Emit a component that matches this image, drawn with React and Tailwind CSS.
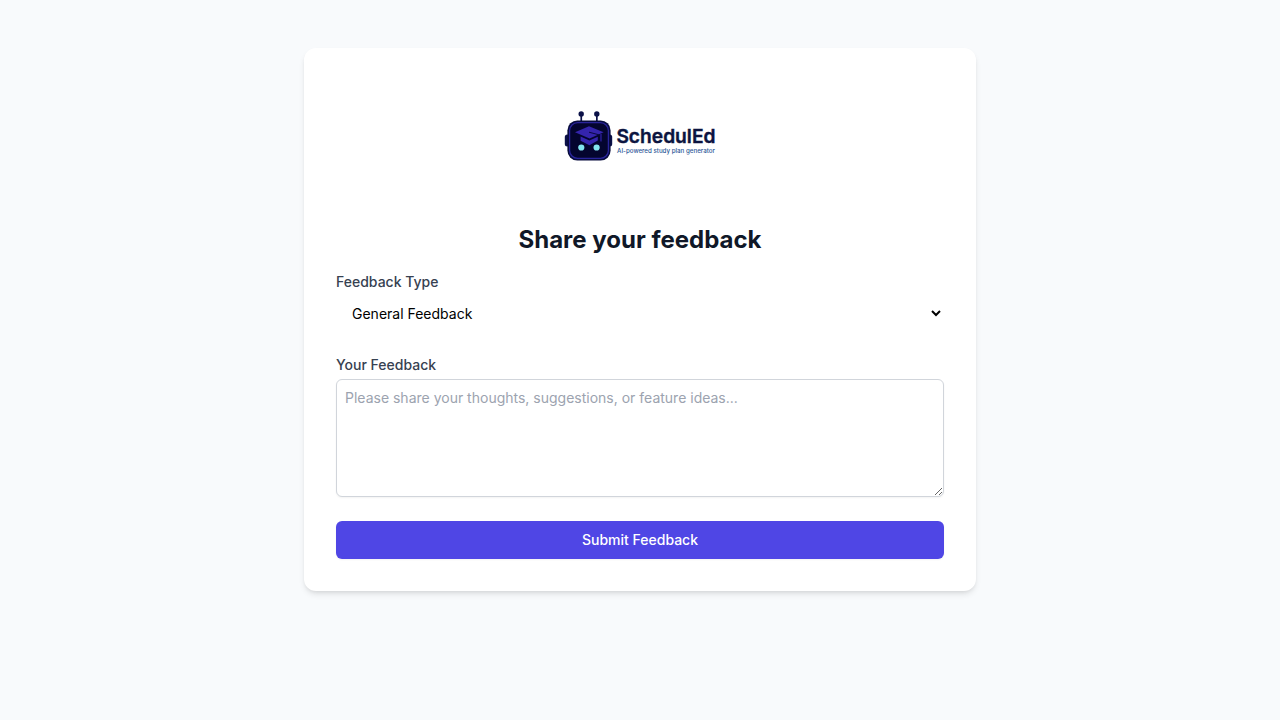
function Logo() {
  return (
    <svg viewBox="0 0 152 52" className="h-[52px] w-[152px] overflow-visible" role="img" aria-label="SchedulEd">
      <g fill="#0b1148">
        <circle cx="17.2" cy="4" r="2.7" />
        <circle cx="32.8" cy="4" r="2.7" />
        <rect x="16.4" y="4" width="1.7" height="8" />
        <rect x="32" y="4" width="1.7" height="8" />
        <rect x="0.8" y="24.5" width="5" height="12" rx="2.5" />
        <rect x="43.2" y="24.5" width="5" height="12" rx="2.5" />
      </g>
      <rect x="3.4" y="10.4" width="43.2" height="40.2" rx="10" fill="#070b3c" />
      <rect x="5.6" y="12.6" width="38.8" height="35.8" rx="8" fill="#04052f" stroke="#29249b" strokeWidth="1.3" />
      <path d="M11 22.2 25 16.2 39.6 22.2 25.6 28.6Z" fill="#3424ad" />
      <path d="M16.6 26.6 25.4 30.6 33.8 26.8V30.4L25.4 35.2 16.6 30.8Z" fill="#3424ad" />
      <path d="M25 22.2 36.4 25.2V31" fill="none" stroke="#080741" strokeWidth="1" />
      <path d="M37 24V31.4" fill="none" stroke="#3424ad" strokeWidth="1.1" />
      <circle cx="17.3" cy="37.5" r="3.1" fill="#83e5ef" />
      <circle cx="32.6" cy="37.5" r="3.1" fill="#83e5ef" />
      <text x="52.4" y="33" fontSize="19.2" fontWeight="600" fill="#0b1440" stroke="#0b1440" strokeWidth="0.4" className="font-['Inter',sans-serif]">SchedulEd</text>
      <text x="53" y="43" fontSize="6.2" fontWeight="500" fill="#2b5797" className="font-['Inter',sans-serif]">AI-powered study plan generator</text>
    </svg>
  );
}

export default function App() {
  return (
    <main className="min-h-screen bg-[#f8fafc] px-4 py-12 font-['Inter',sans-serif] antialiased">
      <div className="mx-auto max-w-2xl rounded-xl bg-white p-8 shadow-md">
        <div className="mb-8 flex h-28 items-center justify-center">
          <Logo />
        </div>
        <h1 className="mb-4 text-center text-2xl font-bold text-gray-900">Share your feedback</h1>
        <form className="space-y-6" onSubmit={(e) => e.preventDefault()}>
          <div>
            <label htmlFor="type" className="block text-sm font-medium text-[#374151]">Feedback Type</label>
            <select id="type" className="mt-1 block h-[35px] w-full rounded-md bg-white pl-3 text-sm text-black">
              <option>General Feedback</option>
              <option>Bug Report</option>
              <option>Feature Request</option>
            </select>
          </div>
          <div>
            <label htmlFor="feedback" className="block text-sm font-medium text-[#374151]">Your Feedback</label>
            <textarea
              id="feedback"
              rows={5}
              placeholder="Please share your thoughts, suggestions, or feature ideas..."
              className="mt-1 block w-full rounded-md border border-[#d1d5db] bg-white p-2 text-sm shadow-xs placeholder:text-[#9ca3af]"
            />
          </div>
          <button type="submit" className="block w-full rounded-md bg-[#4f46e5] px-4 py-[9px] text-sm font-medium text-white shadow-xs">
            Submit Feedback
          </button>
        </form>
      </div>
    </main>
  );
}
